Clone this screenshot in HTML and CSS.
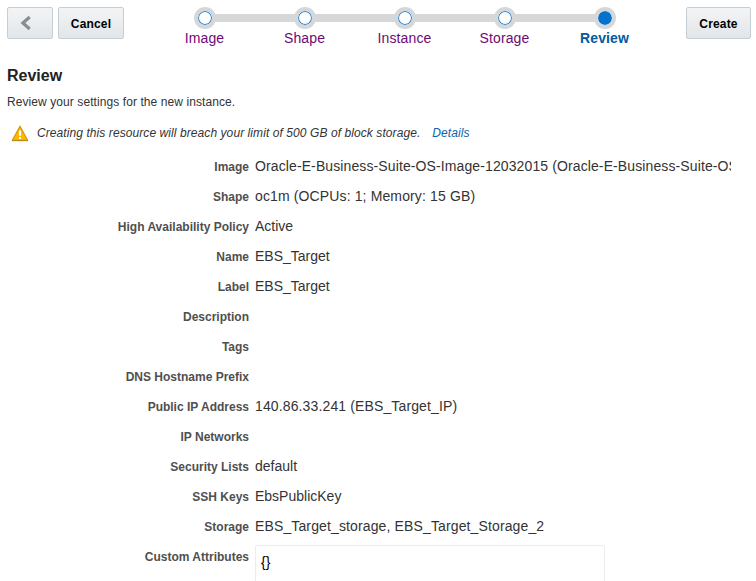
FILE: index.html
```html
<!DOCTYPE html>
<html lang="en">
<head>
<meta charset="utf-8">
<title>Create Instance - Review</title>
<link rel="stylesheet" href="styles.css">
</head>
<body>
<header class="toolbar">
  <div class="actions">
    <button class="btn btn-back" aria-label="Back"><svg width="12" height="16" viewBox="0 0 12 16"><path d="M9.7 2L2.9 8l6.8 6" fill="none" stroke="#8a8d90" stroke-width="3.2"/></svg></button>
    <button class="btn btn-cancel">Cancel</button>
  </div>
  <ol class="train">
    <li class="step"><span class="dot"></span><a>Image</a></li>
    <li class="step"><span class="dot"></span><a>Shape</a></li>
    <li class="step"><span class="dot"></span><a>Instance</a></li>
    <li class="step"><span class="dot"></span><a>Storage</a></li>
    <li class="step current"><span class="dot"></span><a>Review</a></li>
  </ol>
  <button class="btn btn-create">Create</button>
</header>
<main>
  <h1>Review</h1>
  <p class="intro">Review your settings for the new instance.</p>
  <div class="warning">
    <svg width="18" height="17" viewBox="0 0 18 17"><path d="M9 1.2L16.6 15.4H1.4z" fill="#fdb900" stroke="#d39c12" stroke-width="1.3" stroke-linejoin="round"/><path d="M1 15.7h16" stroke="#b98a1b" stroke-width="1"/><path d="M9 5.5v5.2M9 12v2" stroke="#fff" stroke-width="2"/></svg>
    <em>Creating this resource will breach your limit of 500 GB of block storage.</em>
    <a>Details</a>
  </div>
  <dl class="summary">
    <dt>Image</dt><dd class="image-name">Oracle-E-Business-Suite-OS-Image-12032015 (Oracle-E-Business-Suite-OS</dd>
    <dt>Shape</dt><dd class="wide">oc1m (OCPUs: 1; Memory: 15 GB)</dd>
    <dt>High Availability Policy</dt><dd>Active</dd>
    <dt>Name</dt><dd>EBS_Target</dd>
    <dt>Label</dt><dd>EBS_Target</dd>
    <dt>Description</dt><dd></dd>
    <dt>Tags</dt><dd></dd>
    <dt>DNS Hostname Prefix</dt><dd></dd>
    <dt>Public IP Address</dt><dd class="wide">140.86.33.241 (EBS_Target_IP)</dd>
    <dt>IP Networks</dt><dd></dd>
    <dt>Security Lists</dt><dd>default</dd>
    <dt>SSH Keys</dt><dd>EbsPublicKey</dd>
    <dt>Storage</dt><dd class="wide">EBS_Target_storage, EBS_Target_Storage_2</dd>
    <dt>Custom Attributes</dt><dd class="editor">{}</dd>
  </dl>
</main>
</body>
</html>
```
FILE: styles.css
```css
* { box-sizing: border-box; }
html, body { height: 100%; overflow: hidden; }
body {
  margin: 0;
  background: #fff;
  color: #333;
  font: 12px/16px "Liberation Sans", Arial, sans-serif;
}
.toolbar {
  display: flex;
  justify-content: space-between;
  height: 60px;
  padding: 7px 5px 0 7px;
}
.actions { display: flex; gap: 5px; width: 148px; }
.btn {
  height: 32px;
  padding: 0;
  border: 1px solid #c4ced7;
  border-radius: 2px;
  background: linear-gradient(#f3f4f5, #e2e6e9);
  color: #000;
  font: bold 12px/32px "Liberation Sans", Arial, sans-serif;
  letter-spacing: 0.15px;
}
.btn-back { width: 46px; }
.btn-back svg { display: block; margin: 0 auto; transform: translateX(-4px); }
.btn-cancel { width: 66px; }
.btn-create { width: 65px; }
.train { display: flex; width: 500px; margin: 0 auto 0 0; padding: 0; list-style: none; }
.step {
  display: flex;
  flex-direction: column;
  align-items: center;
  width: 100px;
  font-size: 14px;
  color: #6e0a77;
  background: linear-gradient(#d5d7d8, #d5d7d8) 0 7px / 100% 8px no-repeat;
}
.step:first-child { background-position: 100% 7px; background-size: 50% 8px; }
.step:last-child { background-size: 50% 8px; }
.dot {
  width: 22px;
  height: 22px;
  border: 4px solid #d5d7d8;
  border-radius: 50%;
  background: #fff;
  background-clip: padding-box;
  box-shadow: inset 0 0 0 1px #2a80ce;
}
.current .dot { background: #0572ce; background-clip: padding-box; box-shadow: none; }
.step a { margin: 1px 1px 0 0; letter-spacing: 0.12px; }
.current { color: #035a9e; font-weight: bold; }
h1 { margin: 6px 0 0 7px; font-size: 16px; line-height: 20px; color: #222; }
.intro { margin: 8px 0 0 7px; letter-spacing: 0.08px; }
.warning { display: flex; height: 18px; margin: 14px 0 0 11px; align-items: center; letter-spacing: 0.08px; }
.warning em { margin-left: 8px; }
.warning a { margin-left: 12px; color: #0b64b0; font-style: italic; }
.summary {
  display: grid;
  grid-template-columns: 249px 476px;
  grid-auto-rows: 30px;
  column-gap: 6px;
  margin: 9px 0 0;
  line-height: 30px;
}
dt { padding-top: 1px; text-align: right; color: #4f4f4f; font-weight: bold; }
dd { margin: 0; overflow: hidden; white-space: nowrap; font-size: 14px; color: #333; }
.wide { letter-spacing: 0.13px; }
.image-name { letter-spacing: 0.11px; }
.editor {
  width: 350px;
  height: 60px;
  margin-top: 4px;
  padding: 1px 5px;
  border: 1px solid #ececec;
  border-radius: 2px;
  color: #000;
}
```
